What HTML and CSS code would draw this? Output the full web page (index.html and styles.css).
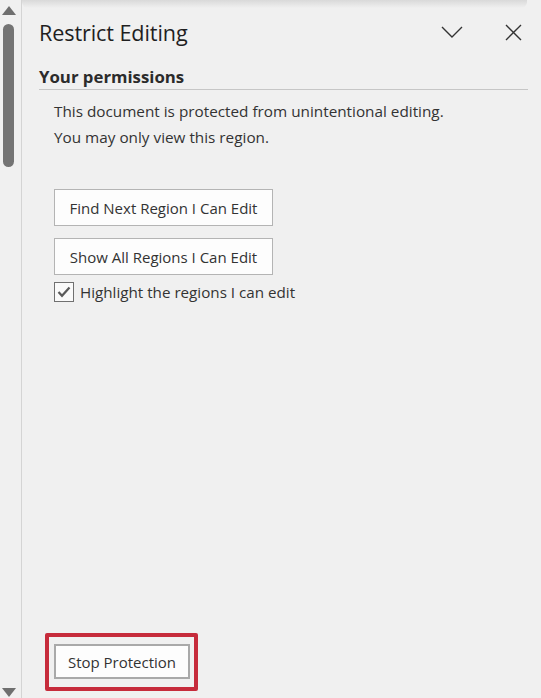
FILE: index.html
```html
<!DOCTYPE html>
<html lang="en">
<head>
<meta charset="utf-8">
<title>Restrict Editing</title>
<link rel="stylesheet" href="styles.css">
</head>
<body>
<div class="app">
  <div class="scrollbar">
    <div class="arrow arrow-up"></div>
    <div class="thumb"></div>
    <div class="track"></div>
    <div class="arrow arrow-down"></div>
  </div>
  <div class="panel">
    <div class="top-shadow"></div>
    <div class="header">
      <h1 class="title">Restrict Editing</h1>
      <div class="header-actions">
        <button class="icon-btn" aria-label="Options">
          <svg width="22" height="12" viewBox="0 0 22 12"><path d="M1 1 L11 11 L21 1" fill="none" stroke="#333" stroke-width="1.4"/></svg>
        </button>
        <button class="icon-btn" aria-label="Close">
          <svg width="17" height="17" viewBox="0 0 17 17"><path d="M1 1 L16 16 M16 1 L1 16" fill="none" stroke="#333" stroke-width="1.4"/></svg>
        </button>
      </div>
    </div>
    <h2 class="section-title">Your permissions</h2>
    <div class="section-body">
      <p class="info">This document is protected from unintentional editing.</p>
      <p class="info">You may only view this region.</p>
      <div class="actions">
        <button class="btn">Find Next Region I Can Edit</button>
        <button class="btn">Show All Regions I Can Edit</button>
        <label class="check">
          <span class="box">
            <svg width="14" height="12" viewBox="0 0 14 12"><path d="M1.5 6 L5 9.8 L12.5 1.5" fill="none" stroke="#5a5a5a" stroke-width="2.2"/></svg>
          </span>
          <span class="check-label">Highlight the regions I can edit</span>
        </label>
      </div>
    </div>
    <div class="footer">
      <div class="highlight">
        <button class="btn btn-stop">Stop Protection</button>
      </div>
    </div>
  </div>
</div>
</body>
</html>
```
FILE: styles.css
```css
* { box-sizing: border-box; }
html, body { margin: 0; padding: 0; }
body {
  background: #f0f0f0;
  font-family: "Open Sans", "Noto Sans", sans-serif;
  color: #333;
}
.app {
  display: flex;
  height: 698px;
  overflow: hidden;
}
.scrollbar {
  width: 22px;
  flex: none;
  border-right: 1px solid #d4d4d4;
  display: flex;
  flex-direction: column;
  align-items: flex-start;
  padding-left: 2px;
  background: #f0f0f0;
}
.arrow {
  width: 0;
  height: 0;
  border-left: 7px solid transparent;
  border-right: 7px solid transparent;
}
.arrow-up {
  margin-top: 6px;
  border-bottom: 9px solid #6f6f6f;
}
.arrow-down {
  margin-bottom: 1px;
  border-top: 9px solid #6f6f6f;
}
.thumb {
  margin-top: 9px;
  margin-left: 1px;
  width: 11px;
  height: 143px;
  border-radius: 6px;
  background: #747474;
}
.track { flex: 1; }
.panel {
  flex: 1;
  position: relative;
  display: flex;
  flex-direction: column;
  padding: 0 13px 0 17px;
}
.top-shadow {
  position: absolute;
  top: 0;
  left: 0;
  right: 14px;
  height: 8px;
  background: linear-gradient(#d9d9d9, rgba(240,240,240,0));
  border-radius: 0 0 6px 6px;
}
.header {
  display: flex;
  align-items: center;
  justify-content: space-between;
  height: 64px;
}
.title {
  margin: 0;
  font-size: 21.6px;
  font-weight: 400;
  color: #1f1f1f;
  letter-spacing: -0.1px;
}
.header-actions {
  display: flex;
  align-items: center;
  gap: 42px;
  padding-right: 6px;
}
.icon-btn {
  border: 0;
  background: none;
  padding: 0;
  display: flex;
}
.section-title {
  margin: 2px 0 0;
  font-size: 16.8px;
  font-weight: 700;
  color: #2b2b2b;
  padding-bottom: 1px;
  border-bottom: 1px solid #c6c6c6;
  line-height: 22px;
}
.section-body {
  padding-left: 15px;
  padding-top: 8px;
}
.info {
  margin: 0;
  font-size: 15.3px;
  line-height: 26px;
  color: #333;
}
.actions {
  margin-top: 39px;
  display: flex;
  flex-direction: column;
  align-items: flex-start;
  gap: 12px;
}
.btn {
  font-family: "Open Sans", "Noto Sans", sans-serif;
  font-size: 15px;
  color: #333;
  background: #fdfdfd;
  border: 1px solid #b4b4b4;
  height: 37px;
  width: 219px;
  padding: 0;
}
.check {
  display: flex;
  align-items: center;
  gap: 6px;
  margin-top: -5px;
  font-size: 15.2px;
  color: #333;
}
.box {
  width: 20px;
  height: 20px;
  border: 1.5px solid #707070;
  background: #fafafa;
  display: flex;
  align-items: center;
  justify-content: center;
}
.footer {
  margin-top: auto;
  padding-bottom: 7px;
  padding-left: 6px;
}
.highlight {
  display: inline-flex;
  border: 4px solid #c62b3b;
  padding: 7px 4px 8px 5px;
  border-radius: 2px;
}
.btn-stop {
  width: 136px;
  height: 35px;
  border: 2px solid #a9a9a9;
}
```
